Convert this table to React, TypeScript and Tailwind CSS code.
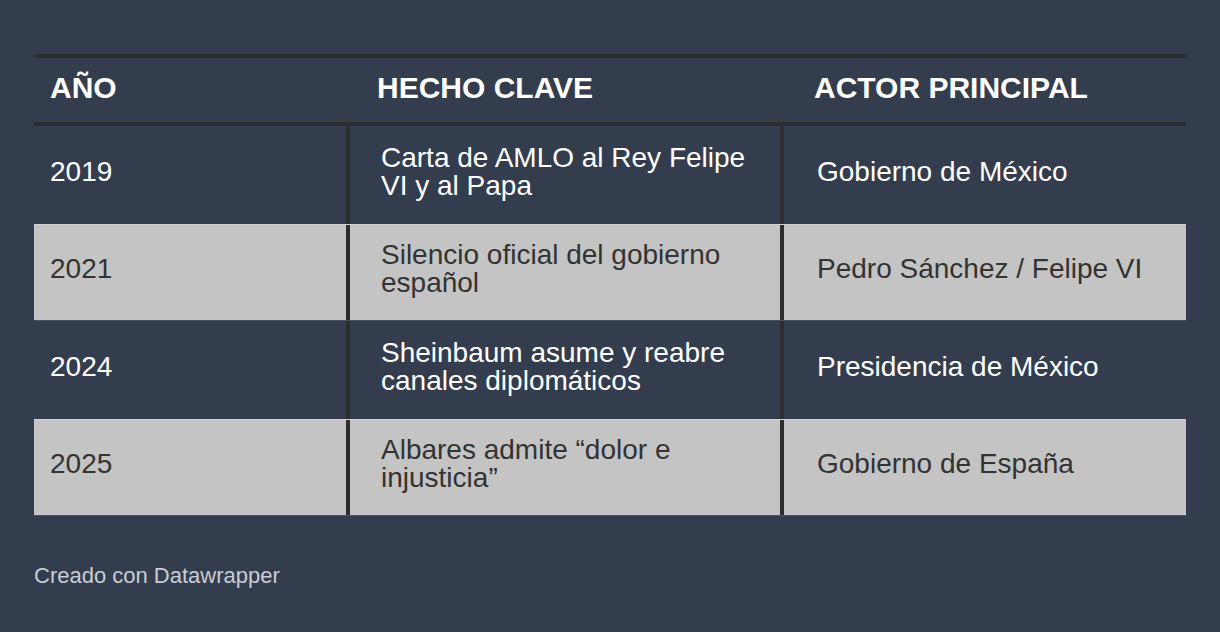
import React from 'react';

const rows = [
  { year: '2019', fact: 'Carta de AMLO al Rey Felipe VI y al Papa', actor: 'Gobierno de México', light: false },
  { year: '2021', fact: 'Silencio oficial del gobierno español', actor: 'Pedro Sánchez / Felipe VI', light: true },
  { year: '2024', fact: 'Sheinbaum asume y reabre canales diplomáticos', actor: 'Presidencia de México', light: false },
  { year: '2025', fact: 'Albares admite “dolor e injusticia”', actor: 'Gobierno de España', light: true },
];

export default function App() {
  return (
    <div
      className="w-[1220px] h-[632px] bg-[#333d4e] pt-[54px] px-[34px] overflow-hidden"
      style={{ fontFamily: '"Liberation Sans", Arial, sans-serif' }}
    >
      {/* Table */}
      <div className="w-[1152px] border-t-4 border-[#2d2d2d]">
        {/* Header */}
        <div className="grid grid-cols-[312px_434px_406px] h-[68px] border-b-4 border-[#2d2d2d] text-white text-[30px] font-bold leading-[34px]">
          <div className="flex items-center pl-[16px] pb-[5px]">AÑO</div>
          <div className="flex items-center pl-[31px] pb-[5px]">HECHO CLAVE</div>
          <div className="flex items-center pl-[34px] pb-[5px]">ACTOR PRINCIPAL</div>
        </div>

        {/* Body */}
        {rows.map((r) => (
          <div
            key={r.year}
            className={`grid grid-cols-[312px_434px_406px] h-[97.5px] text-[28px] leading-[28px] ${
              r.light
                ? 'bg-[#c4c4c4] text-[#333333] border-t border-b border-t-[#d2d2d2] border-b-[#4a5363]'
                : 'text-white'
            }`}
          >
            <div className="flex items-center pl-[16px] pb-[6px]">{r.year}</div>
            <div className="flex items-center border-l-4 border-[#2d2d2d] pl-[31px] pr-[15px] pb-[6px]">
              <span>{r.fact}</span>
            </div>
            <div className="flex items-center border-l-4 border-[#2d2d2d] pl-[33px] pr-[16px] pb-[6px]">
              <span>{r.actor}</span>
            </div>
          </div>
        ))}
      </div>

      {/* Footer */}
      <p className="mt-[43px] text-[22px] text-[#c9ccd1]">Creado con Datawrapper</p>
    </div>
  );
}
